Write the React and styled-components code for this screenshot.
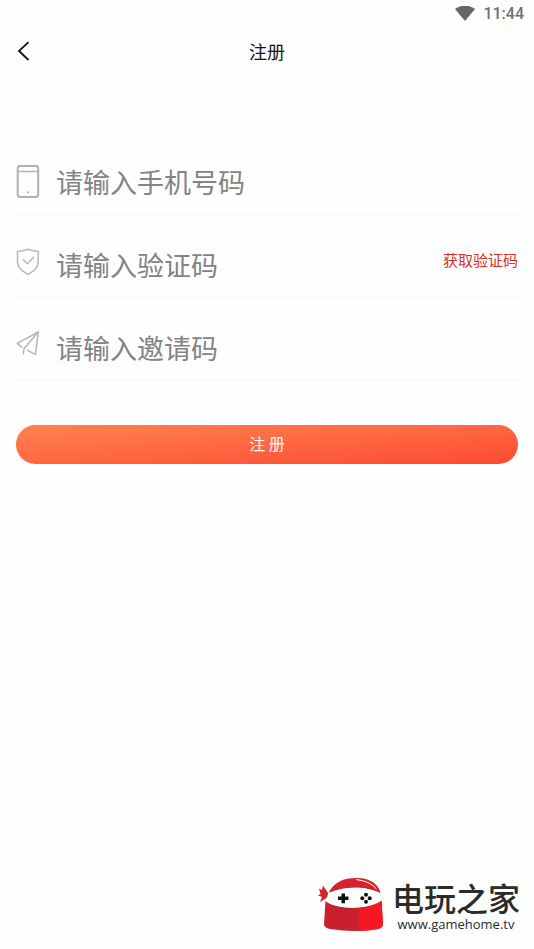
import React from "react";
import styled, { createGlobalStyle } from "styled-components";

const GlobalStyle = createGlobalStyle`
  * { box-sizing: border-box; }
  body {
    margin: 0;
    background: #fefefe;
    font-family: "Noto Sans CJK SC", sans-serif;
  }
`;

const Page = styled.div`
  min-height: 100vh;
  display: flex;
  flex-direction: column;
`;

const StatusBar = styled.div`
  height: 28px;
  padding: 0 10px;
  display: flex;
  align-items: center;
  justify-content: flex-end;
  gap: 8px;
  color: #707070;
  font: 500 16px/28px Roboto, sans-serif;
`;

const Header = styled.header`
  height: 46px;
  padding: 0 16px;
  display: grid;
  grid-template-columns: 32px 1fr 32px;
  align-items: center;
`;

const BackButton = styled.button`
  display: flex;
  padding: 0;
  border: 0;
  background: none;
  cursor: pointer;
`;

const Title = styled.h1`
  margin: 0;
  text-align: center;
  font-size: 18px;
  line-height: 24px;
  font-weight: 400;
  color: #111;
`;

const Form = styled.form`
  padding: 58px 16px 0;
  display: flex;
  flex-direction: column;
`;

const Field = styled.div`
  height: 83px;
  padding-top: 33px;
  display: flex;
  align-items: flex-start;
  border-bottom: 1px solid #f4f4f4;
`;

const FieldLabel = styled.label`
  display: flex;
  flex: none;
  width: 40px;
`;

const TextInput = styled.input`
  flex: 1;
  min-width: 0;
  height: 34px;
  padding: 0;
  border: 0;
  outline: 0;
  background: none;
  color: #333;
  font: 400 27px/34px "Noto Sans CJK SC", sans-serif;
  &::placeholder { color: #838383; opacity: 1; }
`;

const CodeButton = styled.button`
  padding: 0;
  border: 0;
  background: none;
  color: #dc2e24;
  font: 400 15px/24px "Noto Sans CJK SC", sans-serif;
  cursor: pointer;
`;

const SubmitButton = styled.button`
  height: 39px;
  margin-top: 44px;
  padding: 0 0 3px;
  border: 0;
  border-radius: 20px;
  background: linear-gradient(to bottom right, #ff8350, #fe4a33);
  color: #fff;
  font: 400 16px/36px "Noto Sans CJK SC", sans-serif;
  cursor: pointer;
`;

const Brand = styled.footer`
  margin-top: auto;
  padding: 0 14px 17px;
  display: flex;
  justify-content: flex-end;
  align-items: flex-end;
  gap: 8px;
`;

const BrandText = styled.div`
  display: flex;
  flex-direction: column;
  align-items: center;
  color: #2b2b2b;
`;

const BrandName = styled.span`
  font-size: 32px;
  line-height: 38px;
  font-weight: 500;
`;

const BrandUrl = styled.span`
  font: 400 13px/16px "Open Sans", sans-serif;
`;

const WifiIcon = () => (
  <svg width="20" height="16" viewBox="0 0 20 16" aria-hidden="true">
    <path d="M0 3Q10-4 20 3L10 15Z" fill="#666" />
  </svg>
);

const BackIcon = () => (
  <svg width="14" height="20" viewBox="0 0 14 20" fill="none" stroke="#111" strokeWidth="1.8" aria-hidden="true">
    <path d="M12.500 1.200 3 10l9.500 9" />
  </svg>
);

const PhoneIcon = () => (
  <svg width="24" height="34" viewBox="0 0 24 34" fill="none" stroke="#b0b0b0" strokeWidth="2" aria-hidden="true">
    <rect x="1.700" y="1" width="20.500" height="31" rx="2.500" />
    <path d="M2 6.500h20" strokeWidth="1.500" />
    <circle cx="12" cy="27.300" r="1" fill="#aaa" stroke="none" />
  </svg>
);

const ShieldIcon = () => (
  <svg width="24" height="28" viewBox="0 0 24 28" fill="none" stroke="#b8b8b8" strokeWidth="1.500" strokeLinejoin="round" aria-hidden="true">
    <path d="M12 1.200Q17 3 22.200 3.400V14C22.200 20 17.500 23.500 12 26.300 6.500 23.500 1.500 20 1.500 14V3.400Q7 3 12 1.200Z" />
    <path d="m6.800 11.200 4.700 4.500L18 8.800" />
  </svg>
);

const PlaneIcon = () => (
  <svg width="24" height="26" viewBox="0 0 24 26" fill="none" stroke="#b3b3b3" strokeWidth="1.400" strokeLinejoin="round" strokeLinecap="round" aria-hidden="true">
    <path d="M6 16.500 1.200 12.400 22.300.800 19.500 23.500 11.500 19.300" />
    <path d="M22.300.800 8.800 16.800Q7.200 18.500 7.500 22.800" />
  </svg>
);

const NinjaLogo = () => (
  <svg width="66" height="55" viewBox="0 0 66 55" aria-hidden="true">
    <path d="M10.500 16C16 5 25 1 39 1c13 0 22 6 23.500 15.500C49 9 27 9 10.500 16Z" fill="#d9202d" />
    <path d="M38 2.500Q52 4 58.500 12" fill="none" stroke="#fff" strokeWidth="1" />
    <path d="M10 16 5 8.500 4 13 1 11.500 2.500 17 0 18.500l4 1.500-2 5 8-5Z" fill="#d9202d" />
    <path d="M7.500 24C19 33 50 33 63.500 23.500L65 47Q65 51 60 52 37 56 12 52 6 51 6 47Z" fill="#c9202e" />
    <path d="M41 30.500Q55 29.500 63.500 23.500L65 47Q65 51 60 52 51 54 41 54Z" fill="#f31824" />
    <path d="M10.500 16C27 9 49 9 62.500 16.500L63.500 23.500C50 33 19 33 7.500 24Z" fill="#fff" />
    <path d="M23.500 16.500h3.500v3h3.500V23H27v3.200h-3.500V23H20v-3.500h3.500Z" fill="#111" />
    <circle cx="48" cy="17.800" r="2" fill="#111" />
    <circle cx="48" cy="24.800" r="2" fill="#111" />
    <circle cx="44.300" cy="21.300" r="2" fill="#111" />
    <circle cx="51.700" cy="21.300" r="2" fill="#111" />
  </svg>
);

export default function App() {
  return (
    <Page>
      <GlobalStyle />
      <StatusBar>
        <WifiIcon />
        <span>11:44</span>
      </StatusBar>
      <Header>
        <BackButton type="button" aria-label="返回"><BackIcon /></BackButton>
        <Title>注册</Title>
      </Header>
      <Form onSubmit={(event) => event.preventDefault()}>
        <Field>
          <FieldLabel htmlFor="phone" aria-label="手机号码"><PhoneIcon /></FieldLabel>
          <TextInput id="phone" type="tel" placeholder="请输入手机号码" />
        </Field>
        <Field>
          <FieldLabel htmlFor="code" aria-label="验证码"><ShieldIcon /></FieldLabel>
          <TextInput id="code" type="text" placeholder="请输入验证码" />
          <CodeButton type="button">获取验证码</CodeButton>
        </Field>
        <Field>
          <FieldLabel htmlFor="invite" aria-label="邀请码"><PlaneIcon /></FieldLabel>
          <TextInput id="invite" type="text" placeholder="请输入邀请码" />
        </Field>
        <SubmitButton type="submit">注 册</SubmitButton>
      </Form>
      <Brand>
        <NinjaLogo />
        <BrandText>
          <BrandName>电玩之家</BrandName>
          <BrandUrl>www.gamehome.tv</BrandUrl>
        </BrandText>
      </Brand>
    </Page>
  );
}
